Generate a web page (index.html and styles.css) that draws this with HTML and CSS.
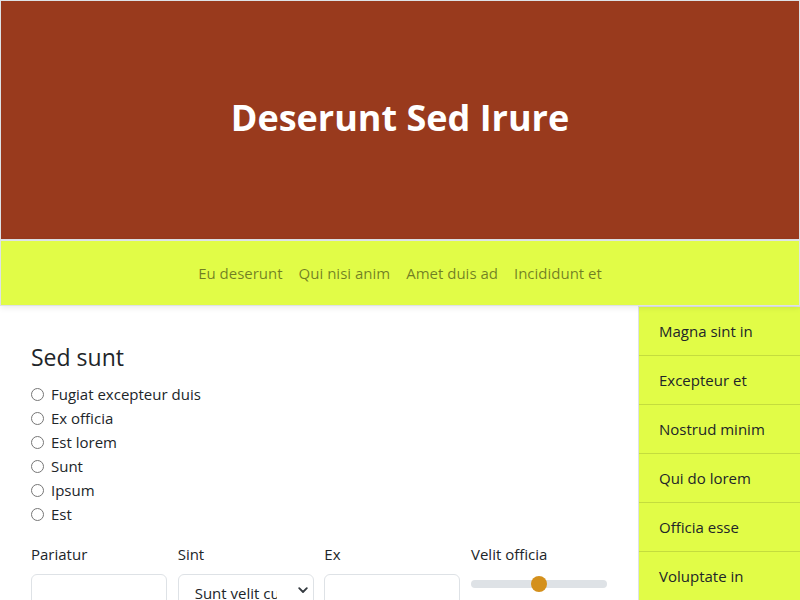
FILE: index.html
```html
<!DOCTYPE html>
<html lang="la">
<head>
<meta charset="utf-8">
<title>Deserunt Sed Irure</title>
<link rel="stylesheet" href="styles.css">
</head>
<body>
<header class="hero">
  <h1 class="hero-title">Deserunt Sed Irure</h1>
</header>
<nav class="topnav">
  <a class="nav-link" href="#">Eu deserunt</a>
  <a class="nav-link" href="#">Qui nisi anim</a>
  <a class="nav-link" href="#">Amet duis ad</a>
  <a class="nav-link" href="#">Incididunt et</a>
</nav>
<div class="layout">
  <main class="content">
    <h2 class="section-title">Sed sunt</h2>
    <div class="radios">
      <label class="radio"><input type="radio" name="r"> <span>Fugiat excepteur duis</span></label>
      <label class="radio"><input type="radio" name="r"> <span>Ex officia</span></label>
      <label class="radio"><input type="radio" name="r"> <span>Est lorem</span></label>
      <label class="radio"><input type="radio" name="r"> <span>Sunt</span></label>
      <label class="radio"><input type="radio" name="r"> <span>Ipsum</span></label>
      <label class="radio"><input type="radio" name="r"> <span>Est</span></label>
    </div>
    <div class="form-grid">
      <div class="field">
        <label class="field-label">Pariatur</label>
        <input class="control" type="text">
      </div>
      <div class="field">
        <label class="field-label">Sint</label>
        <div class="select-wrap">
          <select class="control select">
            <option>Sunt velit culpa</option>
          </select>
          <svg class="chevron" width="10" height="7" viewBox="0 0 10 7"><path d="M1.2 1.2L5 5l3.8-3.8" fill="none" stroke="#343a40" stroke-width="1.8" stroke-linecap="round" stroke-linejoin="round"/></svg>
        </div>
      </div>
      <div class="field">
        <label class="field-label">Ex</label>
        <input class="control" type="text">
      </div>
      <div class="field">
        <label class="field-label">Velit officia</label>
        <input class="range" type="range" min="0" max="100" value="50">
      </div>
    </div>
  </main>
  <aside class="sidebar">
    <a class="side-item" href="#">Magna sint in</a>
    <a class="side-item" href="#">Excepteur et</a>
    <a class="side-item" href="#">Nostrud minim</a>
    <a class="side-item" href="#">Qui do lorem</a>
    <a class="side-item" href="#">Officia esse</a>
    <a class="side-item" href="#">Voluptate in</a>
  </aside>
</div>
</body>
</html>
```
FILE: styles.css
```css
* { box-sizing: border-box; }
html, body { margin: 0; padding: 0; }
body {
  font-family: "Open Sans", "Noto Sans", sans-serif;
  font-size: 15px;
  line-height: 24px;
  color: #212529;
  background: #fff;
  overflow: hidden;
}
.hero {
  height: 240px;
  background: #993a1d;
  border: 1px solid #dee2e6;
  display: flex;
  align-items: center;
  justify-content: center;
  padding-bottom: 4px;
}
.hero-title {
  margin: 0;
  color: #fff;
  font-size: 36px;
  font-weight: 700;
  line-height: 1.2;
}
.topnav {
  height: 66px;
  background: #e1fc47;
  border: 1px solid #dee2e6;
  box-shadow: 0 2px 6px rgba(0,0,0,0.08);
  display: flex;
  align-items: center;
  justify-content: center;
  position: relative;
  z-index: 1;
}
.nav-link {
  color: rgba(0,0,0,0.5);
  text-decoration: none;
  padding: 0 8px;
}
.layout {
  display: flex;
}
.content {
  flex: 1;
  padding: 39px 31px 0 31px;
}
.section-title {
  margin: 0 0 12px 0;
  font-size: 23px;
  font-weight: 400;
  line-height: 25px;
}
.radios {
  display: flex;
  flex-direction: column;
  margin-bottom: 16px;
}
.radio {
  display: flex;
  align-items: center;
  height: 24px;
}
.radio input {
  margin: 0 7px 0 0;
  width: 13px;
  height: 13px;
}
.form-grid {
  display: grid;
  grid-template-columns: repeat(4, 1fr);
  column-gap: 10.67px;
}
.field-label {
  display: block;
  margin-bottom: 8px;
}
.control {
  display: block;
  width: 100%;
  height: 38px;
  border: 1px solid #dee2e6;
  border-radius: 6px;
  padding: 6px 12px;
  font: inherit;
  color: #212529;
  background: #fff;
}
.select-wrap {
  position: relative;
}
.select {
  appearance: none;
  -webkit-appearance: none;
  padding: 6px 36px 6px 16px;
}
.chevron {
  position: absolute;
  right: 6px;
  top: 13px;
  width: 10px;
  height: 7px;
}
.range {
  -webkit-appearance: none;
  appearance: none;
  width: 100%;
  height: 16px;
  margin: 2px 0 0 0;
  background: transparent;
}
.range::-webkit-slider-runnable-track {
  height: 8px;
  background: #dee2e6;
  border-radius: 4px;
}
.range::-webkit-slider-thumb {
  -webkit-appearance: none;
  width: 16px;
  height: 16px;
  margin-top: -4px;
  border-radius: 50%;
  background: #d4901c;
  border: 0;
}
.sidebar {
  width: 162px;
  background: #e1fc47;
  border-left: 1px solid #dee2e6;
  border-top: 1px solid #dee2e6;
  display: flex;
  flex-direction: column;
  min-height: 300px;
}
.side-item {
  display: block;
  padding: 12px 20px;
  color: #212529;
  text-decoration: none;
  border-bottom: 1px solid rgba(0,0,0,0.125);
}
```
